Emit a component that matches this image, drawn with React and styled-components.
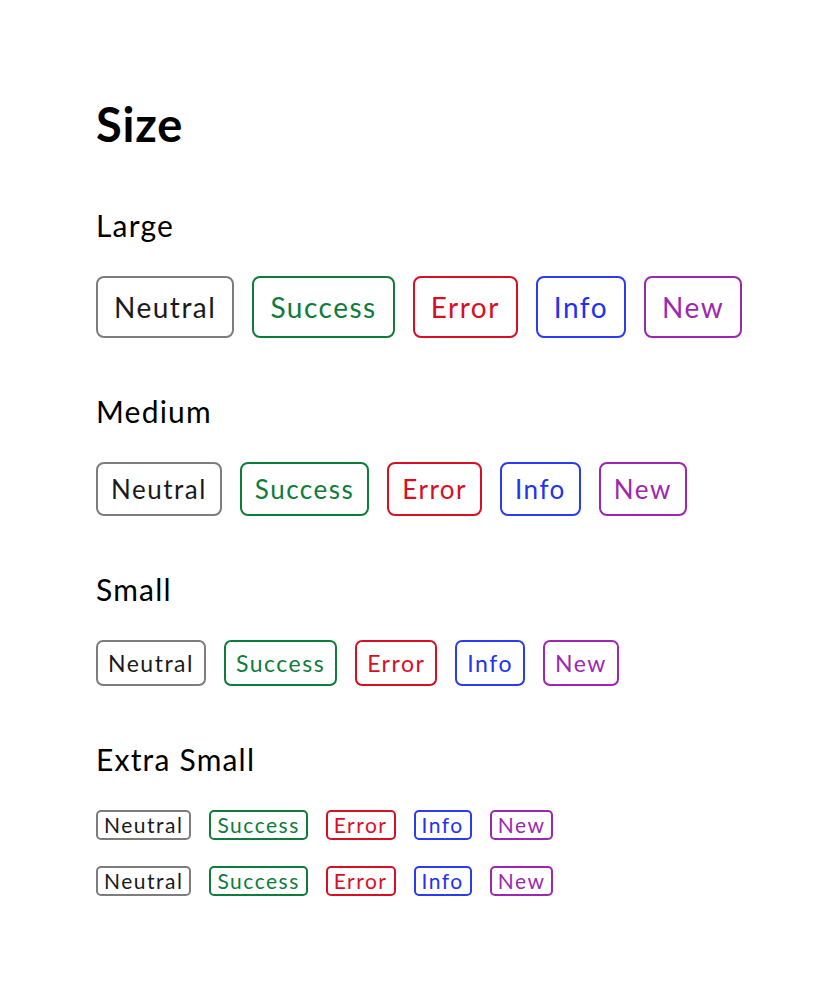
import React from 'react'
import styled, { createGlobalStyle } from 'styled-components'

const GlobalStyle = createGlobalStyle`
  body {
    margin: 0;
    background: #ffffff;
    font-family: Lato, "Noto Sans", sans-serif;
    color: #000000;
  }
`

const tones = {
  neutral: { border: '#7d7d7d', text: '#1a1a1a' },
  success: { border: '#0e7c3a', text: '#0e7c3a' },
  error: { border: '#d70f25', text: '#d70f25' },
  info: { border: '#2b3bef', text: '#2233ee' },
  new: { border: '#9c27b0', text: '#9c27b0' },
}

const sizes = {
  lg: { font: 28, line: 34, py: 12, px: 16, radius: 8 },
  md: { font: 26, line: 30, py: 10, px: 13, radius: 8 },
  sm: { font: 23, line: 28, py: 7, px: 10, radius: 7 },
  xs: { font: 21, line: 26, py: 0, px: 6, radius: 5 },
}

const badges = [
  { tone: 'neutral', label: 'Neutral' },
  { tone: 'success', label: 'Success' },
  { tone: 'error', label: 'Error' },
  { tone: 'info', label: 'Info' },
  { tone: 'new', label: 'New' },
]

const Page = styled.main`
  padding: 96px 0 80px 96px;
`

const Title = styled.h1`
  margin: 0 0 55px;
  font-size: 47px;
  line-height: 56px;
  font-weight: 700;
  letter-spacing: 0.8px;
`

const Section = styled.section`
  margin-bottom: 55px;
`

const Label = styled.h2`
  margin: 0 0 33px;
  font-size: 30px;
  line-height: 36px;
  font-weight: 400;
  letter-spacing: 1.2px;
`

const Rows = styled.div`
  display: flex;
  flex-direction: column;
  gap: 26px;
`

const Row = styled.div`
  display: flex;
  align-items: center;
  gap: 18px;
`

const Badge = styled.span`
  display: inline-flex;
  align-items: center;
  box-sizing: border-box;
  border: 2px solid ${p => tones[p.$tone].border};
  border-radius: ${p => sizes[p.$size].radius}px;
  color: ${p => tones[p.$tone].text};
  font-size: ${p => sizes[p.$size].font}px;
  line-height: ${p => sizes[p.$size].line}px;
  padding: ${p => sizes[p.$size].py}px ${p => sizes[p.$size].px}px;
  letter-spacing: 1.5px;
`

const BadgeRow = ({ size }) => (
  <Row>
    {badges.map(b => (
      <Badge key={b.tone} $tone={b.tone} $size={size}>{b.label}</Badge>
    ))}
  </Row>
)

const SizeSection = ({ label, size, count = 1 }) => (
  <Section>
    <Label>{label}</Label>
    <Rows>
      {Array.from({ length: count }, (_, i) => (
        <BadgeRow key={i} size={size} />
      ))}
    </Rows>
  </Section>
)

const App = () => (
  <Page>
    <GlobalStyle />
    <Title>Size</Title>
    <SizeSection label="Large" size="lg" />
    <SizeSection label="Medium" size="md" />
    <SizeSection label="Small" size="sm" />
    <SizeSection label="Extra Small" size="xs" count={2} />
  </Page>
)

export default App
